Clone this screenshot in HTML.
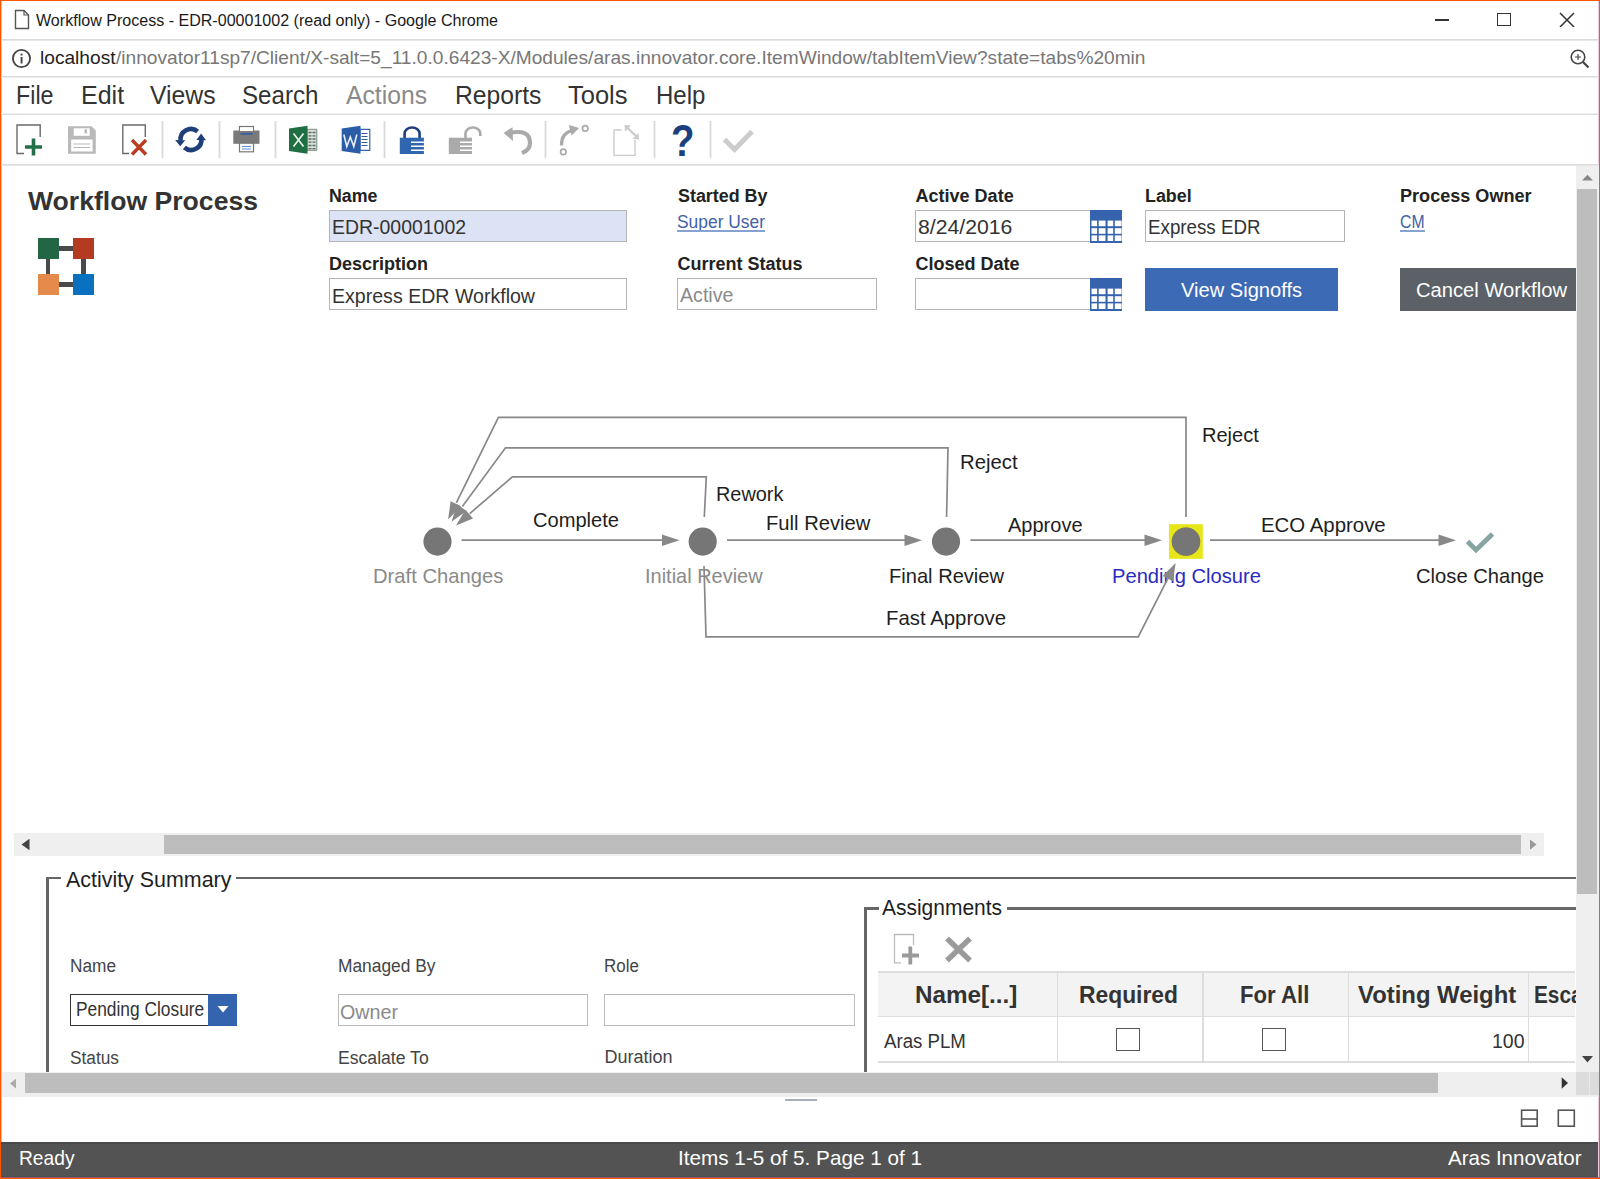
<!DOCTYPE html>
<html><head><meta charset="utf-8"><title>Workflow Process</title>
<style>
html,body{margin:0;padding:0;}
body{width:1600px;height:1179px;position:relative;overflow:hidden;background:#ff5800;font-family:"Liberation Sans",sans-serif;}
.t{position:absolute;white-space:nowrap;font-family:"Liberation Sans",sans-serif;}
.r{position:absolute;display:block;}
</style></head><body>
<div class="r" style="left:1px;top:1px;width:1598px;height:1177px;background:#ffffff;"></div>
<div class="r" style="left:1px;top:1px;width:1px;height:1177px;background:#eab4c8;"></div>
<div class="r" style="left:1598px;top:1px;width:1px;height:1177px;background:#f0cce0;"></div>
<svg class="r" style="left:14px;top:9px;" width="16" height="21" viewBox="0 0 16 21"><path d="M1.5 1.5 H10 L14.5 6 V19.5 H1.5 Z" fill="none" stroke="#555" stroke-width="1.4"/><path d="M10 1.5 V6 H14.5" fill="none" stroke="#555" stroke-width="1.2"/></svg>
<div class="t" style="left:36.00px;top:12.90px;font-size:16px;line-height:16px;color:#1a1a1a;transform:scaleX(1.0036);transform-origin:0 0;">Workflow Process - EDR-00001002 (read only) - Google Chrome</div>
<div class="r" style="left:1435px;top:19px;width:14px;height:1.5px;background:#333;"></div>
<div class="r" style="left:1497px;top:13px;width:14px;height:13px;border:1.5px solid #333;box-sizing:border-box;"></div>
<svg class="r" style="left:1559px;top:12px;" width="16" height="15" viewBox="0 0 16 15"><path d="M1 1 L15 15 M15 1 L1 15" stroke="#333" stroke-width="1.5"/></svg>
<div class="r" style="left:1px;top:39px;width:1597px;height:1px;background:#dadada;"></div>
<div class="r" style="left:1px;top:40px;width:1597px;height:1px;background:#e8e8e8;"></div>
<svg class="r" style="left:11px;top:48px;" width="21" height="21" viewBox="0 0 21 21"><circle cx="10.5" cy="10.5" r="8.6" fill="none" stroke="#444" stroke-width="1.8"/><rect x="9.6" y="9" width="1.9" height="6.5" fill="#444"/><rect x="9.6" y="5.6" width="1.9" height="1.9" fill="#444"/></svg>
<div class="t" style="left:40.00px;top:48.35px;font-size:19px;line-height:19px;color:#222;transform:scaleX(1.0070);transform-origin:0 0;">localhost</div>
<div class="t" style="left:115.51px;top:48.35px;font-size:19px;line-height:19px;color:#777;transform:scaleX(1.0070);transform-origin:0 0;">/innovator11sp7/Client/X-salt=5_11.0.0.6423-X/Modules/aras.innovator.core.ItemWindow/tabItemView?state=tabs%20min</div>
<svg class="r" style="left:1569px;top:48px;" width="23" height="21" viewBox="0 0 23 21"><circle cx="9" cy="9" r="6.8" fill="none" stroke="#444" stroke-width="1.6"/><path d="M14 14 L19.5 19.5" stroke="#444" stroke-width="2.2"/><path d="M9 6 V12 M6 9 H12" stroke="#444" stroke-width="1.2"/></svg>
<div class="r" style="left:1px;top:76px;width:1597px;height:1px;background:#dcdcdc;"></div>
<div class="r" style="left:1px;top:77px;width:1597px;height:1px;background:#ebebeb;"></div>
<div class="t" style="left:15.50px;top:83.05px;font-size:25px;line-height:25px;color:#333;transform:scaleX(0.9309);transform-origin:0 0;">File</div>
<div class="t" style="left:81.00px;top:83.05px;font-size:25px;line-height:25px;color:#333;">Edit</div>
<div class="t" style="left:150.40px;top:83.05px;font-size:25px;line-height:25px;color:#333;transform:scaleX(0.9904);transform-origin:0 0;">Views</div>
<div class="t" style="left:242.00px;top:83.05px;font-size:25px;line-height:25px;color:#333;transform:scaleX(0.9645);transform-origin:0 0;">Search</div>
<div class="t" style="left:346.00px;top:83.05px;font-size:25px;line-height:25px;color:#8a8a8a;transform:scaleX(0.9880);transform-origin:0 0;">Actions</div>
<div class="t" style="left:454.60px;top:83.05px;font-size:25px;line-height:25px;color:#333;transform:scaleX(0.9870);transform-origin:0 0;">Reports</div>
<div class="t" style="left:568.00px;top:83.05px;font-size:25px;line-height:25px;color:#333;transform:scaleX(1.0195);transform-origin:0 0;">Tools</div>
<div class="t" style="left:655.60px;top:83.05px;font-size:25px;line-height:25px;color:#333;transform:scaleX(0.9608);transform-origin:0 0;">Help</div>
<div class="r" style="left:1px;top:113px;width:1597px;height:1px;background:#f0f0f0;"></div>
<div class="r" style="left:1px;top:114px;width:1597px;height:1px;background:#dcdcdc;"></div>
<div class="r" style="left:162px;top:121px;width:1px;height:37px;background:#d9d9d9;"></div>
<div class="r" style="left:161px;top:121px;width:1px;height:37px;background:#f0f0f0;"></div>
<div class="r" style="left:163px;top:121px;width:1px;height:37px;background:#f0f0f0;"></div>
<div class="r" style="left:219px;top:121px;width:1px;height:37px;background:#d9d9d9;"></div>
<div class="r" style="left:218px;top:121px;width:1px;height:37px;background:#f0f0f0;"></div>
<div class="r" style="left:220px;top:121px;width:1px;height:37px;background:#f0f0f0;"></div>
<div class="r" style="left:275px;top:121px;width:1px;height:37px;background:#d9d9d9;"></div>
<div class="r" style="left:274px;top:121px;width:1px;height:37px;background:#f0f0f0;"></div>
<div class="r" style="left:276px;top:121px;width:1px;height:37px;background:#f0f0f0;"></div>
<div class="r" style="left:384px;top:121px;width:1px;height:37px;background:#d9d9d9;"></div>
<div class="r" style="left:383px;top:121px;width:1px;height:37px;background:#f0f0f0;"></div>
<div class="r" style="left:385px;top:121px;width:1px;height:37px;background:#f0f0f0;"></div>
<div class="r" style="left:545px;top:121px;width:1px;height:37px;background:#d9d9d9;"></div>
<div class="r" style="left:544px;top:121px;width:1px;height:37px;background:#f0f0f0;"></div>
<div class="r" style="left:546px;top:121px;width:1px;height:37px;background:#f0f0f0;"></div>
<div class="r" style="left:654px;top:121px;width:1px;height:37px;background:#d9d9d9;"></div>
<div class="r" style="left:653px;top:121px;width:1px;height:37px;background:#f0f0f0;"></div>
<div class="r" style="left:655px;top:121px;width:1px;height:37px;background:#f0f0f0;"></div>
<div class="r" style="left:710px;top:121px;width:1px;height:37px;background:#d9d9d9;"></div>
<div class="r" style="left:709px;top:121px;width:1px;height:37px;background:#f0f0f0;"></div>
<div class="r" style="left:711px;top:121px;width:1px;height:37px;background:#f0f0f0;"></div>
<div class="r" style="left:1px;top:164px;width:1597px;height:1px;background:#dddddd;"></div>
<div class="r" style="left:1px;top:165px;width:1597px;height:1px;background:#e6e6e6;"></div>
<div class="r" style="left:1px;top:1142px;width:1597px;height:35px;background:#535353;"></div>
<div class="r" style="left:1px;top:1142px;width:1597px;height:2px;background:#4a4a4a;"></div>
<div class="r" style="left:1px;top:1176px;width:1597px;height:1px;background:#4d5050;"></div>
<div class="r" style="left:1px;top:1177px;width:1598px;height:1px;background:#9a5a6a;"></div>
<div class="t" style="left:19.00px;top:1147.15px;font-size:21px;line-height:21px;color:#ffffff;transform:scaleX(0.9143);transform-origin:0 0;">Ready</div>
<div class="t" style="left:678.00px;top:1147.15px;font-size:21px;line-height:21px;color:#ffffff;transform:scaleX(0.9859);transform-origin:0 0;">Items 1-5 of 5. Page 1 of 1</div>
<div class="t" style="left:1448.00px;top:1147.15px;font-size:21px;line-height:21px;color:#ffffff;transform:scaleX(0.9775);transform-origin:0 0;">Aras Innovator</div>
<svg class="r" style="left:14px;top:122px;" width="30" height="36" viewBox="14 122 30 36"><path d="M24 153.5 H17 V125 H40.2 V137" fill="none" stroke="#6a6a6a" stroke-width="1.4"/><path d="M25 147 H42 M33.5 138.5 V155.5" stroke="#23704a" stroke-width="3.6"/></svg>
<svg class="r" style="left:66px;top:124px;" width="32" height="32" viewBox="66 124 32 32"><path d="M68 126.2 H91.5 L95.8 130.5 V153.8 H68 Z" fill="#b9b9b9"/><rect x="73.7" y="128.3" width="16" height="7.5" fill="#fff"/><rect x="84.5" y="129.3" width="2.6" height="4" fill="#b9b9b9"/><rect x="71.2" y="139.5" width="21.4" height="12" fill="#fff"/><path d="M73.5 144 H90 M73.5 147.5 H90" stroke="#b9b9b9" stroke-width="1.2"/></svg>
<svg class="r" style="left:120px;top:122px;" width="30" height="36" viewBox="120 122 30 36"><path d="M129 153.5 H122.8 V125 H145.3 V137" fill="none" stroke="#6a6a6a" stroke-width="1.4"/><path d="M132 140 L146 154.5 M146 140 L132 154.5" stroke="#b83d22" stroke-width="3.4"/></svg>
<svg class="r" style="left:173px;top:124px;" width="36" height="31" viewBox="173 124 36 31"><path d="M180.6 140.5 A 10.3 10.3 0 0 1 197.6 131.6" fill="none" stroke="#1f3f7a" stroke-width="4.6"/><path d="M201.4 138.5 A 10.3 10.3 0 0 1 184.4 147.4" fill="none" stroke="#1f3f7a" stroke-width="4.6"/><path d="M175.2 140 L185.2 140.2 L180.2 146.3 Z" fill="#1f3f7a"/><path d="M196.4 140 L206 140.2 L201.1 133.4 Z" fill="#1f3f7a"/></svg>
<svg class="r" style="left:231px;top:124px;" width="31" height="31" viewBox="231 124 31 31"><rect x="239.5" y="126.5" width="14" height="10" fill="#fff" stroke="#777" stroke-width="1.2"/><rect x="233.3" y="130.5" width="26.2" height="13.3" fill="#7a7a7a"/><rect x="240" y="128" width="13" height="3" fill="#fff"/><rect x="240.5" y="133" width="12" height="1.6" fill="#2a5ea8"/><rect x="239.5" y="143.2" width="14" height="8.6" fill="#fff" stroke="#777" stroke-width="1.2"/><path d="M242 146.5 H251 M242 149 H251" stroke="#5a8ad0" stroke-width="1"/></svg>
<svg class="r" style="left:287px;top:123px;" width="33" height="33" viewBox="287 123 33 33"><path d="M307 129.3 H316.8 V150.3 H307 Z" fill="#d8ddd8" stroke="#7d8a80" stroke-width="1"/><path d="M308.5 132.5 H315.5 M308.5 135.8 H315.5 M308.5 139 H315.5 M308.5 142.2 H315.5 M308.5 145.5 H315.5 M308.5 148.6 H315.5" stroke="#55705e" stroke-width="1.3"/><path d="M312 130.5 V149.5" stroke="#eef2ee" stroke-width="0.8"/><path d="M289 128.5 L307.5 125.8 V153.8 L289 151 Z" fill="#1f6f43"/><path d="M293.5 133.5 L303.5 146.5 M303.5 133.5 L293.5 146.5" stroke="#e8f0ea" stroke-width="1.7"/></svg>
<svg class="r" style="left:340px;top:123px;" width="33" height="33" viewBox="340 123 33 33"><path d="M360 129.3 H369.8 V150.3 H360 Z" fill="#fff" stroke="#3a64aa" stroke-width="1.2"/><path d="M361.5 133.5 H367.5 M361.5 136.5 H367.5 M361.5 139.5 H367.5 M361.5 142.5 H367.5 M361.5 145.5 H367.5" stroke="#3a5a90" stroke-width="1.1"/><path d="M341.7 128.5 L360.5 125.8 V153.8 L341.7 151 Z" fill="#2b5ca8"/><path d="M343.8 134.5 L346.8 146.5 L350.3 137 L353.8 146.5 L356.8 134.5" fill="none" stroke="#e8eef8" stroke-width="1.6"/></svg>
<svg class="r" style="left:397px;top:124px;" width="30" height="32" viewBox="397 124 30 32"><path d="M404.6 138 V133.6 A7.5 6.1 0 0 1 419.6 133.6 V138" fill="none" stroke="#1f3f7a" stroke-width="2.6"/><rect x="399.8" y="137.7" width="24.1" height="16.3" fill="#2f66b0"/><path d="M411 142.3 H424.5 M411 146.2 H424.5 M411 150.2 H424.5" stroke="#fff" stroke-width="1.6"/></svg>
<svg class="r" style="left:446px;top:124px;" width="38" height="32" viewBox="446 124 38 32"><path d="M465.5 138 V133.6 A7.4 6.1 0 0 1 480.3 133.6 V136" fill="none" stroke="#aaaaaa" stroke-width="2.6"/><rect x="448.8" y="137.7" width="23.2" height="16.3" fill="#aaaaaa"/><path d="M460 142.3 H472.5 M460 146.2 H472.5 M460 150.2 H472.5" stroke="#fff" stroke-width="1.6"/></svg>
<svg class="r" style="left:502px;top:125px;" width="32" height="31" viewBox="502 125 32 31"><path d="M511 139 L527 139 A 5.5 6.5 0 0 1 527 152" fill="none" stroke="#aaaaaa" stroke-width="0"/><path d="M508 133.5 Q 530 128 530 143 Q 530 150 522 153" fill="none" stroke="#aaaaaa" stroke-width="4.2"/><path d="M503.5 133 L512.5 127.2 L513 141 Z" fill="#aaaaaa"/></svg>
<svg class="r" style="left:556px;top:124px;" width="36" height="33" viewBox="556 124 36 33"><circle cx="563.3" cy="151.9" r="2.7" fill="none" stroke="#aaaaaa" stroke-width="1.7"/><circle cx="585.2" cy="128.4" r="2.7" fill="none" stroke="#aaaaaa" stroke-width="1.7"/><path d="M561.5 145.5 Q 561 133 572.5 130.5" fill="none" stroke="#aaaaaa" stroke-width="3.2"/><path d="M568.8 125 L579.2 128 L571.5 135.6 Z" fill="#aaaaaa"/></svg>
<svg class="r" style="left:611px;top:123px;" width="30" height="35" viewBox="611 123 30 35"><path d="M621.5 130 H614 V155.4 H635 V140" fill="none" stroke="#cccccc" stroke-width="1.4"/><path d="M626.5 127 L637.5 137.5" stroke="#cccccc" stroke-width="2.4"/><path d="M624.5 125 L631 125.5 L625 131.5 Z M639 139.5 L638.5 133 L632.5 139 Z" fill="#cccccc"/></svg>
<div class="t" style="left:670.95px;top:118.60px;font-size:44px;line-height:44px;color:#1d3f7d;font-weight:bold;transform:scaleX(0.8743);transform-origin:0 0;">?</div>
<svg class="r" style="left:720px;top:126px;" width="36" height="28" viewBox="720 126 36 28"><path d="M724.5 139.5 L734.5 149.5 L752 131.5" fill="none" stroke="#cccccc" stroke-width="5"/></svg>
<div class="t" style="left:28.00px;top:187.90px;font-size:26px;line-height:26px;color:#333;font-weight:bold;transform:scaleX(1.0226);transform-origin:0 0;">Workflow Process</div>
<div class="r" style="left:37.5px;top:238px;width:21.1px;height:21px;background:#236645;"></div>
<div class="r" style="left:73.3px;top:238px;width:20.900000000000006px;height:21px;background:#b53a22;"></div>
<div class="r" style="left:37.5px;top:274.2px;width:21.1px;height:20.80000000000001px;background:#e48b4b;"></div>
<div class="r" style="left:73.3px;top:274.2px;width:20.900000000000006px;height:20.80000000000001px;background:#0a70c0;"></div>
<div class="r" style="left:58.6px;top:246.2px;width:14.699999999999996px;height:4.800000000000011px;background:#4a4a4a;"></div>
<div class="r" style="left:58.6px;top:282.4px;width:14.699999999999996px;height:4.600000000000023px;background:#4a4a4a;"></div>
<div class="r" style="left:45.7px;top:259px;width:4.399999999999999px;height:15.199999999999989px;background:#4a4a4a;"></div>
<div class="r" style="left:81.3px;top:259px;width:4.400000000000006px;height:15.199999999999989px;background:#4a4a4a;"></div>
<div class="t" style="left:329.00px;top:187.20px;font-size:18px;line-height:18px;color:#222;font-weight:bold;transform:scaleX(0.9893);transform-origin:0 0;">Name</div>
<div class="t" style="left:329.00px;top:255.20px;font-size:18px;line-height:18px;color:#222;font-weight:bold;">Description</div>
<div class="t" style="left:677.50px;top:187.20px;font-size:18px;line-height:18px;color:#222;font-weight:bold;transform:scaleX(0.9941);transform-origin:0 0;">Started By</div>
<div class="t" style="left:677.50px;top:255.20px;font-size:18px;line-height:18px;color:#222;font-weight:bold;">Current Status</div>
<div class="t" style="left:915.60px;top:187.20px;font-size:18px;line-height:18px;color:#222;font-weight:bold;">Active Date</div>
<div class="t" style="left:915.60px;top:255.20px;font-size:18px;line-height:18px;color:#222;font-weight:bold;">Closed Date</div>
<div class="t" style="left:1145.00px;top:187.20px;font-size:18px;line-height:18px;color:#222;font-weight:bold;transform:scaleX(0.9933);transform-origin:0 0;">Label</div>
<div class="t" style="left:1400.00px;top:187.20px;font-size:18px;line-height:18px;color:#222;font-weight:bold;transform:scaleX(1.0041);transform-origin:0 0;">Process Owner</div>
<div class="r" style="left:328.5px;top:209.5px;width:298.0px;height:32.0px;background:#dce3f4;border:1.5px solid #b4b4b4;box-sizing:border-box;"></div>
<div class="t" style="left:332.00px;top:217.30px;font-size:20px;line-height:20px;color:#333;transform:scaleX(0.9719);transform-origin:0 0;">EDR-00001002</div>
<div class="r" style="left:328.5px;top:277.5px;width:298.0px;height:32.0px;background:#fff;border:1.5px solid #b4b4b4;box-sizing:border-box;"></div>
<div class="t" style="left:332.00px;top:286.00px;font-size:20px;line-height:20px;color:#333;transform:scaleX(0.9785);transform-origin:0 0;">Express EDR Workflow</div>
<div class="t" style="left:676.50px;top:212.35px;font-size:19px;line-height:19px;color:#3f62a8;transform:scaleX(0.9158);transform-origin:0 0;">Super User</div>
<div class="r" style="left:677px;top:229.5px;width:88px;height:2.0px;background:#86a2d2;"></div>
<div class="r" style="left:677px;top:277.5px;width:200px;height:32.0px;background:#fff;border:1.5px solid #b4b4b4;box-sizing:border-box;"></div>
<div class="t" style="left:680.00px;top:285.00px;font-size:20px;line-height:20px;color:#8a8a8a;transform:scaleX(0.9805);transform-origin:0 0;">Active</div>
<div class="r" style="left:915px;top:209.5px;width:176px;height:32.0px;background:#fff;border:1.5px solid #b4b4b4;box-sizing:border-box;"></div>
<div class="t" style="left:918.00px;top:217.00px;font-size:20px;line-height:20px;color:#333;transform:scaleX(1.0610);transform-origin:0 0;">8/24/2016</div>
<svg class="r" style="left:1090px;top:209.5px;" width="32" height="33.0" viewBox="0 0 32 33"><rect x="0" y="0" width="32" height="33" fill="#3563ad"/><rect x="1.5" y="10.6" width="5.6" height="5.6" fill="#fff"/><rect x="1.5" y="18.2" width="5.6" height="5.6" fill="#fff"/><rect x="1.5" y="25.4" width="5.6" height="5.6" fill="#fff"/><rect x="8.7" y="10.6" width="6.8" height="5.6" fill="#fff"/><rect x="8.7" y="18.2" width="6.8" height="5.6" fill="#fff"/><rect x="8.7" y="25.4" width="6.8" height="5.6" fill="#fff"/><rect x="17.6" y="10.6" width="5.6" height="5.6" fill="#fff"/><rect x="17.6" y="18.2" width="5.6" height="5.6" fill="#fff"/><rect x="17.6" y="25.4" width="5.6" height="5.6" fill="#fff"/><rect x="24.8" y="10.6" width="6.8" height="5.6" fill="#fff"/><rect x="24.8" y="18.2" width="6.8" height="5.6" fill="#fff"/><rect x="24.8" y="25.4" width="6.8" height="5.6" fill="#fff"/></svg>
<div class="r" style="left:915px;top:277.5px;width:176px;height:32.0px;background:#fff;border:1.5px solid #b4b4b4;box-sizing:border-box;"></div>
<svg class="r" style="left:1090px;top:277.5px;" width="32" height="33.0" viewBox="0 0 32 33"><rect x="0" y="0" width="32" height="33" fill="#3563ad"/><rect x="1.5" y="10.6" width="5.6" height="5.6" fill="#fff"/><rect x="1.5" y="18.2" width="5.6" height="5.6" fill="#fff"/><rect x="1.5" y="25.4" width="5.6" height="5.6" fill="#fff"/><rect x="8.7" y="10.6" width="6.8" height="5.6" fill="#fff"/><rect x="8.7" y="18.2" width="6.8" height="5.6" fill="#fff"/><rect x="8.7" y="25.4" width="6.8" height="5.6" fill="#fff"/><rect x="17.6" y="10.6" width="5.6" height="5.6" fill="#fff"/><rect x="17.6" y="18.2" width="5.6" height="5.6" fill="#fff"/><rect x="17.6" y="25.4" width="5.6" height="5.6" fill="#fff"/><rect x="24.8" y="10.6" width="6.8" height="5.6" fill="#fff"/><rect x="24.8" y="18.2" width="6.8" height="5.6" fill="#fff"/><rect x="24.8" y="25.4" width="6.8" height="5.6" fill="#fff"/></svg>
<div class="r" style="left:1144.5px;top:209.5px;width:200.5px;height:32.5px;background:#fff;border:1.5px solid #b4b4b4;box-sizing:border-box;"></div>
<div class="t" style="left:1148.00px;top:217.00px;font-size:20px;line-height:20px;color:#333;transform:scaleX(0.9373);transform-origin:0 0;">Express EDR</div>
<div class="t" style="left:1399.50px;top:212.35px;font-size:19px;line-height:19px;color:#3f62a8;transform:scaleX(0.8291);transform-origin:0 0;">CM</div>
<div class="r" style="left:1400px;top:229.5px;width:24.5px;height:2.0px;background:#86a2d2;"></div>
<div class="r" style="left:1145px;top:268px;width:193px;height:42.5px;background:#3d6ab5;"></div>
<div class="t" style="left:1181.00px;top:279.50px;font-size:20px;line-height:20px;color:#fff;transform:scaleX(1.0046);transform-origin:0 0;">View Signoffs</div>
<div class="r" style="left:1400px;top:268px;width:176px;height:42.5px;background:#5b6167;"></div>
<div class="t" style="left:1416.00px;top:279.50px;font-size:20px;line-height:20px;color:#fff;transform:scaleX(1.0088);transform-origin:0 0;">Cancel Workflow</div>
<div class="t" style="left:533.40px;top:509.35px;font-size:21px;line-height:21px;color:#1e1e1e;transform:scaleX(0.9569);transform-origin:0 0;">Complete</div>
<div class="t" style="left:715.60px;top:482.75px;font-size:21px;line-height:21px;color:#1e1e1e;transform:scaleX(0.9469);transform-origin:0 0;">Rework</div>
<div class="t" style="left:766.20px;top:511.65px;font-size:21px;line-height:21px;color:#1e1e1e;transform:scaleX(0.9610);transform-origin:0 0;">Full Review</div>
<div class="t" style="left:960.00px;top:450.55px;font-size:21px;line-height:21px;color:#1e1e1e;transform:scaleX(0.9677);transform-origin:0 0;">Reject</div>
<div class="t" style="left:1202.00px;top:423.85px;font-size:21px;line-height:21px;color:#1e1e1e;transform:scaleX(0.9542);transform-origin:0 0;">Reject</div>
<div class="t" style="left:1007.80px;top:513.85px;font-size:21px;line-height:21px;color:#1e1e1e;transform:scaleX(0.9525);transform-origin:0 0;">Approve</div>
<div class="t" style="left:1261.00px;top:513.85px;font-size:21px;line-height:21px;color:#1e1e1e;transform:scaleX(0.9712);transform-origin:0 0;">ECO Approve</div>
<div class="t" style="left:885.50px;top:607.35px;font-size:21px;line-height:21px;color:#1e1e1e;transform:scaleX(0.9698);transform-origin:0 0;">Fast Approve</div>
<div class="t" style="left:373.00px;top:564.95px;font-size:21px;line-height:21px;color:#8a8a8a;transform:scaleX(0.9623);transform-origin:0 0;">Draft Changes</div>
<div class="t" style="left:644.80px;top:564.95px;font-size:21px;line-height:21px;color:#8a8a8a;transform:scaleX(0.9506);transform-origin:0 0;">Initial Review</div>
<div class="t" style="left:889.10px;top:564.95px;font-size:21px;line-height:21px;color:#1e1e1e;transform:scaleX(0.9567);transform-origin:0 0;">Final Review</div>
<div class="t" style="left:1112.00px;top:564.95px;font-size:21px;line-height:21px;color:#2b2bc2;transform:scaleX(0.9596);transform-origin:0 0;">Pending Closure</div>
<div class="t" style="left:1416.00px;top:564.95px;font-size:21px;line-height:21px;color:#1e1e1e;transform:scaleX(0.9618);transform-origin:0 0;">Close Change</div>
<svg class="r" style="left:360px;top:400px;" width="1210" height="260" viewBox="360 400 1210 260"><path d="M461.50 540.20 L663.00 540.20" fill="none" stroke="#888888" stroke-width="1.7" stroke-linejoin="miter"/><path d="M679.50 540.20 L662.00 546.00 L662.00 534.40 Z" fill="#888888"/><path d="M727.00 540.20 L905.50 540.20" fill="none" stroke="#888888" stroke-width="1.7" stroke-linejoin="miter"/><path d="M922.00 540.20 L904.50 546.00 L904.50 534.40 Z" fill="#888888"/><path d="M970.50 540.20 L1145.50 540.20" fill="none" stroke="#888888" stroke-width="1.7" stroke-linejoin="miter"/><path d="M1162.00 540.20 L1144.50 546.00 L1144.50 534.40 Z" fill="#888888"/><path d="M1210.00 540.20 L1439.50 540.20" fill="none" stroke="#888888" stroke-width="1.7" stroke-linejoin="miter"/><path d="M1456.00 540.20 L1438.50 546.00 L1438.50 534.40 Z" fill="#888888"/><path d="M1186.00 517.00 L1186.00 417.40 L498.40 417.40 L456.33 502.80" fill="none" stroke="#888888" stroke-width="1.7" stroke-linejoin="miter"/><path d="M448.10 519.50 L450.63 501.24 L461.04 506.36 Z" fill="#888888"/><path d="M946.60 517.00 L948.00 447.80 L505.50 447.80 L462.32 506.57" fill="none" stroke="#888888" stroke-width="1.7" stroke-linejoin="miter"/><path d="M451.50 521.70 L457.14 504.15 L466.51 510.99 Z" fill="#888888"/><path d="M704.30 517.00 L706.30 476.80 L512.30 476.80 L469.72 513.64" fill="none" stroke="#888888" stroke-width="1.7" stroke-linejoin="miter"/><path d="M456.00 525.60 L465.42 509.76 L473.02 518.52 Z" fill="#888888"/><path d="M704.00 566.00 L706.00 636.80 L1138.20 636.80 L1167.77 578.60" fill="none" stroke="#888888" stroke-width="1.7" stroke-linejoin="miter"/><path d="M1175.70 563.00 L1172.94 581.23 L1162.60 575.97 Z" fill="#888888"/><rect x="1169" y="524.2" width="33.8" height="34.6" fill="#e6e619"/><circle cx="1186" cy="541.7" r="14.3" fill="#9a8a50"/><circle cx="437.5" cy="541.6" r="14.1" fill="#767676"/><circle cx="702.7" cy="541.6" r="14.1" fill="#767676"/><circle cx="946" cy="541.6" r="14.1" fill="#767676"/><circle cx="1186" cy="541.6" r="14.1" fill="#767676"/><path d="M1467.5 541.5 L1476 550 L1492.5 534" fill="none" stroke="#86a4a2" stroke-width="4.8"/></svg>
<div class="r" style="left:1576px;top:166px;width:22.5px;height:905.5px;background:#efefef;"></div>
<div class="r" style="left:1577.4px;top:189px;width:19.899999999999864px;height:704.5px;background:#bdbdbd;"></div>
<svg class="r" style="left:1581px;top:174px;" width="13" height="8" viewBox="0 0 13 8"><path d="M1 6.6 L6.5 0.8 L12 6.6 Z" fill="#888"/></svg>
<svg class="r" style="left:1581px;top:1055px;" width="13" height="8" viewBox="0 0 13 8"><path d="M1 1 L6.5 7.5 L12 1 Z" fill="#444"/></svg>
<div class="r" style="left:14.4px;top:833.2px;width:1529.6px;height:22.59999999999991px;background:#efefef;"></div>
<div class="r" style="left:163.7px;top:834.7px;width:1357.8px;height:19.699999999999932px;background:#bdbdbd;"></div>
<svg class="r" style="left:20px;top:838px;" width="11" height="13" viewBox="0 0 11 13"><path d="M9.5 0.8 L1.5 6.4 L9.5 12.2 Z" fill="#444"/></svg>
<svg class="r" style="left:1529px;top:839px;" width="9" height="12" viewBox="0 0 9 12"><path d="M1 0.5 L7.5 5.6 L1 10.8 Z" fill="#999"/></svg>
<div class="r" style="left:46.2px;top:877px;width:2.5999999999999943px;height:195px;background:#666666;"></div>
<div class="r" style="left:46.2px;top:876.8px;width:15.099999999999994px;height:2.400000000000091px;background:#666666;"></div>
<div class="r" style="left:235.5px;top:876.8px;width:1340.0px;height:2.400000000000091px;background:#666666;"></div>
<div class="t" style="left:65.60px;top:868.90px;font-size:22px;line-height:22px;color:#1e1e1e;transform:scaleX(0.9735);transform-origin:0 0;">Activity Summary</div>
<div class="t" style="left:70.00px;top:956.70px;font-size:18px;line-height:18px;color:#444;transform:scaleX(0.9580);transform-origin:0 0;">Name</div>
<div class="t" style="left:337.50px;top:956.70px;font-size:18px;line-height:18px;color:#444;transform:scaleX(0.9647);transform-origin:0 0;">Managed By</div>
<div class="t" style="left:604.40px;top:957.10px;font-size:18px;line-height:18px;color:#444;transform:scaleX(0.9400);transform-origin:0 0;">Role</div>
<div class="r" style="left:70px;top:994px;width:167px;height:31.799999999999955px;background:#fff;border:1.3px solid #333;box-sizing:border-box;"></div>
<div class="t" style="left:76.00px;top:998.80px;font-size:20px;line-height:20px;color:#333;transform:scaleX(0.8670);transform-origin:0 0;">Pending Closure</div>
<div class="r" style="left:208px;top:994px;width:29px;height:31.799999999999955px;background:#3464ad;"></div>
<svg class="r" style="left:216px;top:1005px;" width="14" height="9" viewBox="0 0 14 9"><path d="M1.5 1 L7 7.5 L12.5 1 Z" fill="#fff"/></svg>
<div class="r" style="left:337.5px;top:993.8px;width:250.0px;height:32.200000000000045px;background:#fff;border:1.5px solid #bbbbbb;box-sizing:border-box;"></div>
<div class="t" style="left:340.00px;top:1001.80px;font-size:20px;line-height:20px;color:#8a8a8a;transform:scaleX(0.9846);transform-origin:0 0;">Owner</div>
<div class="r" style="left:604.4px;top:993.8px;width:250.20000000000005px;height:32.200000000000045px;background:#fff;border:1.5px solid #bbbbbb;box-sizing:border-box;"></div>
<div class="t" style="left:70.00px;top:1048.50px;font-size:18px;line-height:18px;color:#444;transform:scaleX(0.9602);transform-origin:0 0;">Status</div>
<div class="t" style="left:337.50px;top:1048.50px;font-size:18px;line-height:18px;color:#444;transform:scaleX(0.9782);transform-origin:0 0;">Escalate To</div>
<div class="t" style="left:604.40px;top:1047.70px;font-size:18px;line-height:18px;color:#444;">Duration</div>
<div class="r" style="left:864px;top:907.2px;width:2.6000000000000227px;height:164.79999999999995px;background:#666666;"></div>
<div class="r" style="left:864px;top:907px;width:14.5px;height:2.5px;background:#666666;"></div>
<div class="r" style="left:1007px;top:907px;width:568.5px;height:2.5px;background:#666666;"></div>
<div class="t" style="left:882.00px;top:897.30px;font-size:22px;line-height:22px;color:#1e1e1e;transform:scaleX(0.9528);transform-origin:0 0;">Assignments</div>
<svg class="r" style="left:891px;top:931px;" width="31" height="35" viewBox="891 931 31 35"><path d="M901 962.8 H894.5 V934.5 H913.5 V945" fill="none" stroke="#bbbbbb" stroke-width="1.3"/><path d="M902 955.5 H919 M910.3 946.5 V964.5" stroke="#9a9a9a" stroke-width="3.8"/></svg>
<svg class="r" style="left:942px;top:934px;" width="34" height="31" viewBox="942 934 34 31"><path d="M947 938.5 L970 960.5 M970 938.5 L947 960.5" stroke="#9a9a9a" stroke-width="5.4"/></svg>
<div class="r" style="left:878.3px;top:971.2px;width:697.2px;height:45.59999999999991px;background:#f3f3f3;"></div>
<div class="r" style="left:878.3px;top:971.2px;width:697.2px;height:1.3999999999999773px;background:#dddddd;"></div>
<div class="r" style="left:878.3px;top:1015.6px;width:697.2px;height:1.3999999999999773px;background:#dddddd;"></div>
<div class="r" style="left:878.3px;top:1061px;width:697.2px;height:1.5px;background:#dddddd;"></div>
<div class="r" style="left:1056.8px;top:971.2px;width:1.400000000000091px;height:91.29999999999995px;background:#dddddd;"></div>
<div class="r" style="left:1202.3px;top:971.2px;width:1.400000000000091px;height:91.29999999999995px;background:#dddddd;"></div>
<div class="r" style="left:1348.0px;top:971.2px;width:1.400000000000091px;height:91.29999999999995px;background:#dddddd;"></div>
<div class="r" style="left:1527.6px;top:971.2px;width:1.400000000000091px;height:91.29999999999995px;background:#dddddd;"></div>
<div class="t" style="left:914.70px;top:983.65px;font-size:23px;line-height:23px;color:#333;font-weight:bold;transform:scaleX(1.0542);transform-origin:0 0;">Name[...]</div>
<div class="t" style="left:1079.20px;top:983.65px;font-size:23px;line-height:23px;color:#333;font-weight:bold;transform:scaleX(0.9932);transform-origin:0 0;">Required</div>
<div class="t" style="left:1239.50px;top:983.65px;font-size:23px;line-height:23px;color:#333;font-weight:bold;transform:scaleX(0.9628);transform-origin:0 0;">For All</div>
<div class="t" style="left:1357.80px;top:983.65px;font-size:23px;line-height:23px;color:#333;font-weight:bold;transform:scaleX(1.0377);transform-origin:0 0;">Voting Weight</div>
<div class="r" style="left:1533.5px;top:980px;width:42px;height:30px;overflow:hidden">
<div class="t" style="left:0.00px;top:3.65px;font-size:23px;line-height:23px;color:#333;font-weight:bold;transform:scaleX(0.9041);transform-origin:0 0;">Escalate To</div>
</div>
<div class="t" style="left:884.00px;top:1030.60px;font-size:20px;line-height:20px;color:#333;transform:scaleX(0.9328);transform-origin:0 0;">Aras PLM</div>
<div class="r" style="left:1116.3px;top:1027.7px;width:23.5px;height:23.09999999999991px;background:#fff;border:1.3px solid #555;box-sizing:border-box;"></div>
<div class="r" style="left:1261.6px;top:1027.7px;width:24.100000000000136px;height:23.09999999999991px;background:#fff;border:1.3px solid #555;box-sizing:border-box;"></div>
<div class="t" style="left:1491.50px;top:1031.20px;font-size:20px;line-height:20px;color:#333;transform:scaleX(0.9739);transform-origin:0 0;">100</div>
<div class="r" style="left:2px;top:1071.5px;width:1573.5px;height:23.5px;background:#efefef;"></div>
<div class="r" style="left:25px;top:1072.5px;width:1413px;height:20.299999999999955px;background:#bdbdbd;"></div>
<svg class="r" style="left:8px;top:1078px;" width="10" height="11" viewBox="0 0 10 11"><path d="M8 0.8 L2 5.6 L8 10.4 Z" fill="#aaa"/></svg>
<svg class="r" style="left:1560px;top:1077px;" width="10" height="12" viewBox="0 0 10 12"><path d="M1.7 0.3 L8 5.9 L1.7 11.8 Z" fill="#333"/></svg>
<div class="r" style="left:1575.5px;top:1071.5px;width:23.0px;height:23.5px;background:#dcdcdc;"></div>
<div class="r" style="left:1589px;top:1071.5px;width:1px;height:23.5px;background:#e8e8e8;"></div>
<div class="r" style="left:2px;top:1095px;width:1596.5px;height:1.5px;background:#eeeeee;"></div>
<div class="r" style="left:784.5px;top:1099.2px;width:32.5px;height:1.599999999999909px;background:#aab0bb;"></div>
<svg class="r" style="left:1519px;top:1108px;" width="21" height="21" viewBox="0 0 21 21"><rect x="2.6" y="2.2" width="15.6" height="16" fill="none" stroke="#555" stroke-width="1.6"/><path d="M2.6 11 H18.2" stroke="#555" stroke-width="1.6"/></svg>
<svg class="r" style="left:1556px;top:1108px;" width="21" height="21" viewBox="0 0 21 21"><rect x="2.3" y="2.2" width="16" height="16" fill="none" stroke="#555" stroke-width="1.6"/></svg>
</body></html>
